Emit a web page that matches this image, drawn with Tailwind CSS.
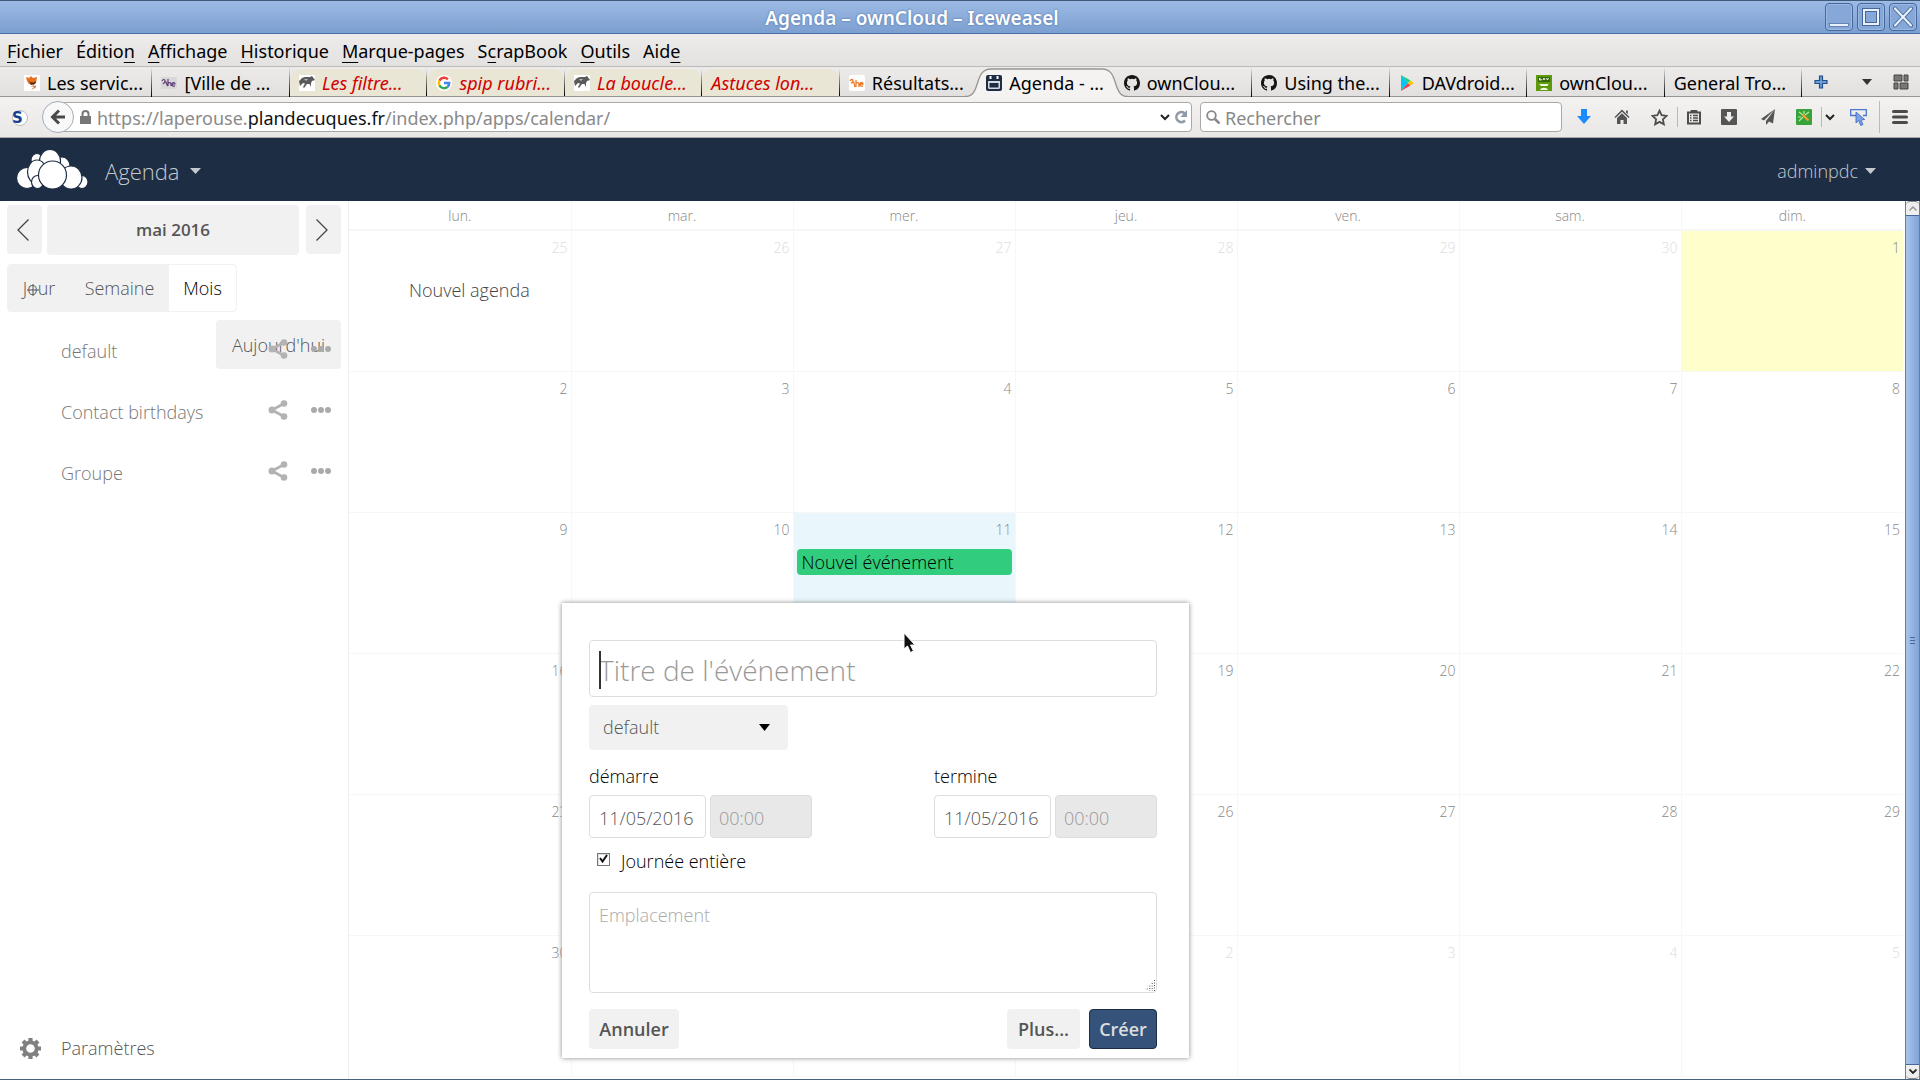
<!DOCTYPE html>
<html lang="fr">
<head>
    <meta charset="UTF-8">
    <meta name="viewport" content="width=device-width, initial-scale=1.0">
    <title>Agenda - ownCloud - Iceweasel</title>
    <script src="https://cdn.jsdelivr.net/npm/@tailwindcss/browser@4"></script>
</head>
<body class="h-screen flex flex-col overflow-hidden bg-white border-b border-[#46627f] font-['Noto_Sans',sans-serif] text-black">
    <!-- Window title -->
    <div class="relative h-[34px] shrink-0 flex items-center justify-center border-t border-b border-t-[#41597a] border-b-[#4a6da5] bg-linear-to-b from-[#9dbae5] to-[#7b9fd0]">
        <span class="text-[19px] leading-6 font-semibold text-white pt-0.5 pr-24 [text-shadow:0_0_2px_#3f639b]">Agenda – ownCloud – Iceweasel</span>
        <div class="absolute right-[3px] top-0.5 flex gap-1">
            <button aria-label="Réduire" class="w-7 h-7 rounded border border-[#47689a] bg-[#85a8d8] shadow-[inset_0_0_0_1px_#9bb9e3]">
                <svg class="w-full h-full" viewBox="0 0 26 26"><rect x="3.500" y="19.500" width="19" height="3" fill="#e9f1fc" stroke="#47689a" stroke-width=".7"/></svg>
            </button>
            <button aria-label="Agrandir" class="w-7 h-7 rounded border border-[#47689a] bg-[#85a8d8] shadow-[inset_0_0_0_1px_#9bb9e3]">
                <svg class="w-full h-full" viewBox="0 0 26 26" fill="none"><rect x="6" y="6" width="14" height="14" stroke="#47689a" stroke-width="4"/><rect x="6" y="6" width="14" height="14" stroke="#e9f1fc" stroke-width="2"/></svg>
            </button>
            <button aria-label="Fermer" class="w-7 h-7 rounded border border-[#47689a] bg-[#85a8d8] shadow-[inset_0_0_0_1px_#9bb9e3]">
                <svg class="w-full h-full" viewBox="0 0 26 26" stroke-linecap="round"><path d="M5 4.500L21 21.500M21 4.500L5 21.500" stroke="#47689a" stroke-width="4"/><path d="M5 4.500L21 21.500M21 4.500L5 21.500" stroke="#e9f1fc" stroke-width="2.200"/></svg>
            </button>
        </div>
    </div>

    <!-- Menu bar -->
    <nav class="h-8 shrink-0 flex items-center gap-[13px] pl-[7px] pt-0.5 text-[18px] leading-6 bg-linear-to-b from-[#edeceb] to-[#e4e2e1]">
        <span><u class="underline-offset-4">F</u>ichier</span>
        <span>Éditio<u class="underline-offset-4">n</u></span>
        <span><u class="underline-offset-4">A</u>ffichage</span>
        <span><u class="underline-offset-4">H</u>istorique</span>
        <span><u class="underline-offset-4">M</u>arque-pages</span>
        <span>S<u class="underline-offset-4">c</u>rapBook</span>
        <span><u class="underline-offset-4">O</u>utils</span>
        <span>Aid<u class="underline-offset-4">e</u></span>
    </nav>

    <!-- Tabs -->
    <div class="h-[31px] shrink-0 flex pl-[15px] border-t border-[#bcbab8] bg-linear-to-b from-[#edebea] to-[#e2e0df] text-[18px] leading-7 whitespace-nowrap shadow-[inset_0_-1px_0_#979593]">
        <div class="flex-1 min-w-0 relative flex items-center gap-[7px] pl-[9px] pt-0.5">
            <svg class="size-4 shrink-0" viewBox="0 0 16 16"><rect width="16" height="16" fill="#fff"/><path d="M2 2l3 1 2-2 2 2 4-1-1 6-3 2-4-1-2-3z" fill="#e5701f"/><path d="M5 6c2 2 4 2 7 0l-1 3-4 1z" fill="#5c2c10"/><path d="M6 11c3 0 5-1 6 0s-2 3-5 4l3-3z" fill="#c9864f"/></svg>
            <span>Les servic...</span>
            <i class="absolute right-0 top-0 h-full w-px bg-linear-to-b from-transparent to-black"></i>
        </div>
        <div class="flex-1 min-w-0 relative flex items-center gap-[7px] pl-[9px] pt-0.5">
            <svg class="size-4 shrink-0" viewBox="0 0 16 16" fill="none"><rect y="2" width="16" height="12" fill="#d9d7d8"/><path d="M1 6c1-2 3-2 3 0s-1 2-2 3M4 6c2 1 1 4 3 5M7 4v7M7 8c3-1 3 0 3 3M11 9h3c0-2-3-2-3 0 0 3 2 2 3 2" stroke="#5b3b78" stroke-width="1.200"/></svg>
            <span>[Ville de ...</span>
            <i class="absolute right-0 top-0 h-full w-px bg-linear-to-b from-transparent to-black"></i>
        </div>
        <div class="flex-1 min-w-0 relative flex items-center gap-[7px] pl-[9px] mt-0.5 mb-px rounded-t-xl bg-[#e9e6d5] italic text-[#d00000]">
            <svg class="size-4 shrink-0" viewBox="0 0 16 16"><rect width="16" height="16" fill="#fff"/><path d="M0 6l3-3 3-1 5 0 2-1 3 4-3 1-1 2 0 4-1.500-3-2.500 0-3 4-1-1 2-3.500-2-.5-3 3z" fill="#5a5a5a"/><path d="M5 4l4 0-2 2z" fill="#bbb"/></svg>
            <span>Les filtre...</span>
            <i class="absolute right-0 top-0 h-full w-px bg-linear-to-b from-transparent to-black"></i>
        </div>
        <div class="flex-1 min-w-0 relative flex items-center gap-[7px] pl-[9px] mt-0.5 mb-px rounded-t-xl bg-[#e9e6d5] italic text-[#d00000]">
            <svg class="size-4 shrink-0" viewBox="0 0 16 16" fill="none" stroke-width="2.400"><circle cx="8" cy="8" r="8" fill="#fff"/><path d="M11.900 4.400A5.200 5.200 0 0 0 3.400 5.600" stroke="#ea4335"/><path d="M3.400 5.600a5.200 5.200 0 0 0 0 4.800" stroke="#fbbc05"/><path d="M3.400 10.400a5.200 5.200 0 0 0 8.200 1.400" stroke="#34a853"/><path d="M11.600 11.800A5 5 0 0 0 13.200 8H8" stroke="#4285f4"/></svg>
            <span>spip rubri...</span>
            <i class="absolute right-0 top-0 h-full w-px bg-linear-to-b from-transparent to-black"></i>
        </div>
        <div class="flex-1 min-w-0 relative flex items-center gap-[7px] pl-[9px] mt-0.5 mb-px rounded-t-xl bg-[#e9e6d5] italic text-[#d00000]">
            <svg class="size-4 shrink-0" viewBox="0 0 16 16"><rect width="16" height="16" fill="#fff"/><path d="M0 6l3-3 3-1 5 0 2-1 3 4-3 1-1 2 0 4-1.500-3-2.500 0-3 4-1-1 2-3.500-2-.5-3 3z" fill="#5a5a5a"/><path d="M5 4l4 0-2 2z" fill="#bbb"/></svg>
            <span>La boucle...</span>
            <i class="absolute right-0 top-0 h-full w-px bg-linear-to-b from-transparent to-black"></i>
        </div>
        <div class="flex-1 min-w-0 relative flex items-center pl-[9px] mt-0.5 mb-px rounded-t-xl bg-[#e9e6d5] italic text-[#d00000]">
            <span>Astuces lon...</span>
            <i class="absolute right-0 top-0 h-full w-px bg-linear-to-b from-transparent to-black"></i>
        </div>
        <div class="flex-1 min-w-0 relative flex items-center gap-[7px] pl-[9px] pt-0.5">
            <svg class="size-4 shrink-0" viewBox="0 0 16 16" fill="none"><rect width="16" height="16" rx="2" fill="#fff"/><path d="M1 6c1-2 3-2 3 0s-1 2-2 2M4 6c2 1 1 5 2 6M7 5v7M7 8c3-1 3 0 3 4M11 9h3c0-2-3-2-3 0 0 3 2 2 3 2" stroke="#ee7a28" stroke-width="1.300"/></svg>
            <span>Résultats...</span>
        </div>
        <!-- Active tab -->
        <div class="flex-1 min-w-0 relative flex items-center pl-[9px] pt-0.5">
            <svg class="absolute -left-3 bottom-0 w-[163px] h-[29px]" viewBox="0 0 163 29" preserveAspectRatio="none"><path d="M0 29C17 29 8 1 26 1H137C155 1 146 29 163 29z" fill="#f4f3f2"/><path d="M0 28.500C17 28.500 8 1 26 1H137C155 1 146 28.500 163 28.500" fill="none" stroke="#979593" stroke-width="1.300"/></svg>
            <div class="relative flex items-center gap-[7px]">
                <svg class="size-4 shrink-0" viewBox="0 0 16 16"><rect width="16" height="16" rx="2" fill="#1d2d44"/><path d="M2 6h12v6.500a1.500 1.500 0 0 1-1.500 1.500h-9A1.500 1.500 0 0 1 2 12.500z" fill="#d6dae0"/><path d="M3.500 8h9v4.500h-9z" fill="#1d2d44"/><path d="M4.500 1v3M11.500 1v3" stroke="#fff" stroke-width="2"/></svg>
                <span>Agenda - ...</span>
            </div>
        </div>
        <div class="flex-1 min-w-0 relative flex items-center gap-[7px] pl-[9px] pt-0.5">
            <svg class="size-4 shrink-0" viewBox="0 0 16 16" fill="#151515"><path d="M8 0C3.580 0 0 3.580 0 8c0 3.540 2.290 6.530 5.470 7.590.4.070.55-.17.55-.38 0-.19-.01-.82-.01-1.490-2.010.37-2.530-.49-2.690-.94-.09-.23-.48-.94-.82-1.130-.28-.15-.68-.52-.01-.53.63-.01 1.080.58 1.230.82.72 1.210 1.870.87 2.330.66.07-.52.28-.87.51-1.070-1.780-.2-3.640-.89-3.640-3.950 0-.87.31-1.590.82-2.150-.08-.2-.36-1.020.08-2.120 0 0 .67-.21 2.200.82a7.600 7.600 0 0 1 4 0c1.530-1.040 2.200-.82 2.200-.82.44 1.100.16 1.920.08 2.120.51.56.82 1.270.82 2.150 0 3.070-1.870 3.750-3.650 3.950.29.25.54.73.54 1.480 0 1.070-.01 1.930-.01 2.200 0 .21.15.46.55.38A8 8 0 0 0 16 8c0-4.420-3.580-8-8-8z"/></svg>
            <span>ownClou...</span>
            <i class="absolute right-0 top-0 h-full w-px bg-linear-to-b from-transparent to-black"></i>
        </div>
        <div class="flex-1 min-w-0 relative flex items-center gap-[7px] pl-[9px] pt-0.5">
            <svg class="size-4 shrink-0" viewBox="0 0 16 16" fill="#151515"><path d="M8 0C3.580 0 0 3.580 0 8c0 3.540 2.290 6.530 5.470 7.590.4.070.55-.17.55-.38 0-.19-.01-.82-.01-1.490-2.010.37-2.530-.49-2.690-.94-.09-.23-.48-.94-.82-1.130-.28-.15-.68-.52-.01-.53.63-.01 1.080.58 1.230.82.72 1.210 1.870.87 2.330.66.07-.52.28-.87.51-1.070-1.780-.2-3.640-.89-3.640-3.950 0-.87.31-1.590.82-2.150-.08-.2-.36-1.020.08-2.120 0 0 .67-.21 2.200.82a7.600 7.600 0 0 1 4 0c1.530-1.040 2.200-.82 2.200-.82.44 1.100.16 1.920.08 2.120.51.56.82 1.270.82 2.150 0 3.070-1.870 3.750-3.650 3.950.29.25.54.73.54 1.480 0 1.070-.01 1.930-.01 2.200 0 .21.15.46.55.38A8 8 0 0 0 16 8c0-4.420-3.580-8-8-8z"/></svg>
            <span>Using the...</span>
            <i class="absolute right-0 top-0 h-full w-px bg-linear-to-b from-transparent to-black"></i>
        </div>
        <div class="flex-1 min-w-0 relative flex items-center gap-[7px] pl-[9px] pt-0.5">
            <svg class="size-4 shrink-0" viewBox="0 0 16 16"><path d="M2 0v16l7-8z" fill="#00c8f5"/><path d="M2 0l7 8 2.500-2.500z" fill="#1fd07a"/><path d="M2 16l7-8 2.500 2.500z" fill="#f43b4e"/><path d="M11.500 5.500L15 8l-3.500 2.500L9 8z" fill="#fdc50b"/></svg>
            <span>DAVdroid...</span>
            <i class="absolute right-0 top-0 h-full w-px bg-linear-to-b from-transparent to-black"></i>
        </div>
        <div class="flex-1 min-w-0 relative flex items-center gap-[7px] pl-[9px] pt-0.5">
            <svg class="size-4 shrink-0" viewBox="0 0 16 16"><rect width="16" height="16" fill="#5c9a0a"/><path d="M2 2h12v5H2z" fill="#366806"/><path d="M3.500 5V3l2 2zM7 5l1-2 1 2M10.500 3l1 2 1-2" fill="none" stroke="#fff" stroke-width=".9"/><path d="M3 9h9l1-1.500-1.500 3.500H5zM4 15c1-3 7-3 8 0z" fill="#f2f8e4"/></svg>
            <span>ownClou...</span>
            <i class="absolute right-0 top-0 h-full w-px bg-linear-to-b from-transparent to-black"></i>
        </div>
        <div class="flex-1 min-w-0 relative flex items-center pl-[9px] pt-0.5">
            <span>General Tro...</span>
            <i class="absolute right-0 top-0 h-full w-px bg-linear-to-b from-transparent to-black"></i>
        </div>
        <div class="w-[118px] shrink-0 flex items-center justify-between pl-3 pr-[11px]">
            <button aria-label="Nouvel onglet"><svg class="size-3.5" viewBox="0 0 14 14"><path d="M5.500 1h3v4.500H13v3H8.500V13h-3V8.500H1v-3h4.500z" fill="#6f9bd6" stroke="#234f8c" stroke-width="1.200"/></svg></button>
            <button aria-label="Liste des onglets" class="pl-3"><svg class="w-2.5 h-1.5" viewBox="0 0 10 6"><path d="M0 0h10L5 6z" fill="#333"/></svg></button>
            <button aria-label="Groupes"><svg class="size-4" viewBox="0 0 16 16" fill="#777" stroke="#444"><path d="M1 1h8v6H1zM11 1h4v6h-4zM1 9h4v6H1zM7 9h8v6H7z"/></svg></button>
        </div>
    </div>

    <!-- Address bar -->
    <div class="h-[41px] shrink-0 flex items-center border-b border-[#a9a7a5] bg-linear-to-b from-[#f3f2f1] to-[#e9e8e7] pl-[11px]">
        <svg class="size-[17px] shrink-0" viewBox="0 0 17 17"><circle cx="9" cy="9" r="7.500" fill="#fff" stroke="#bbb"/><text x="1" y="14" font-family="DejaVu Sans" font-weight="bold" font-size="15" fill="#173f8f">S</text></svg>
        <button aria-label="Page précédente" class="relative z-10 ml-3.5 -mr-5 size-8 shrink-0 rounded-full border border-[#a5adb8] bg-[#f8f8f8] flex items-center justify-center">
            <svg class="size-4" viewBox="0 0 16 16" fill="none" stroke="#4a4a4a" stroke-width="3"><path d="M15 8H3M9 1.500L2.500 8 9 14.500"/></svg>
        </button>
        <div class="flex-1 h-[30px] flex items-center border border-[#aaa8a5] rounded-sm bg-white pl-[25px] pr-[3px] text-[18px] leading-6 text-[#8a8a8a]">
            <svg class="w-[11px] h-3.5 shrink-0" viewBox="0 0 11 14"><path d="M0 6h11v8H0z" fill="#777"/><path d="M2.500 7V4a3 3 0 0 1 6 0v3" fill="none" stroke="#777" stroke-width="2"/></svg>
            <span class="flex-1 pl-1.5 pt-0.5">https://laperouse.<span class="text-[#111]">plandecuques.fr</span>/index.php/apps/calendar/</span>
            <svg class="w-2.5 h-[7px] mr-1" viewBox="0 0 10 7"><path d="M1 1l4 4 4-4" fill="none" stroke="#222" stroke-width="2"/></svg>
            <svg class="size-3.5" viewBox="0 0 14 14"><path d="M10.500 3.200A5 5 0 1 0 11 10.500" fill="none" stroke="#909aa8" stroke-width="2.600"/><path d="M13 0v7H6.500z" fill="#909aa8"/></svg>
        </div>
        <div class="w-[362px] h-[30px] ml-2 shrink-0 flex items-center gap-[5px] border border-[#aaa8a5] rounded-sm bg-white pl-[5px]">
            <svg class="size-3.5 shrink-0" viewBox="0 0 14 14" fill="none" stroke="#888"><circle cx="5.500" cy="5.500" r="4.300" stroke-width="1.800"/><path d="M9 9l4.500 4.500" stroke-width="2.600"/></svg>
            <input type="text" aria-label="Rechercher" placeholder="Rechercher" class="flex-1 h-7 pt-0.5 text-[18px] leading-6 outline-none placeholder:text-[#888]">
        </div>
        <div class="w-[358px] h-full shrink-0 flex items-center pl-[3px]">
            <button aria-label="Téléchargements" class="w-[38px] flex justify-center"><svg class="size-4" viewBox="0 0 16 16"><path d="M5 0h6v7h4l-7 8-7-8h4z" fill="#1a8cff"/></svg></button>
            <button aria-label="Accueil" class="w-[38px] flex justify-center"><svg class="size-4" viewBox="0 0 16 16" fill="#555"><path d="M8 .5L15.500 8l-1 1L8 2.800 1.500 9l-1-1z"/><path d="M8 4.300l5 4.700v6H9.500v-4h-3v4H3V9z"/><path d="M12 1.500h1.800v3.700L12 3.500z"/></svg></button>
            <button aria-label="Marquer cette page" class="w-9 flex justify-center"><svg class="size-[17px]" viewBox="0 0 16 16"><path d="M8 1.600l2 4.300 4.700.6-3.500 3.200.9 4.700L8 12.100l-4.100 2.300.9-4.700L1.300 6.500 6 5.900z" fill="none" stroke="#4d4d4d" stroke-width="1.700"/></svg></button>
            <button aria-label="Marque-pages" class="w-8 h-5 border-l border-[#b4bbc4] flex justify-center items-center"><svg class="size-4" viewBox="0 0 16 16"><path d="M2 3.500h12v11H2z" fill="none" stroke="#4d4d4d" stroke-width="2"/><path d="M5 3V1.500h6V3z" stroke="#4d4d4d" fill="#4d4d4d"/><path d="M4 6.500h1.500M7 6.500h5M4 9h1.500M7 9h5M4 11.500h1.500M7 11.500h5" stroke="#4d4d4d" stroke-width="1.300"/></svg></button>
            <button aria-label="Enregistrer" class="w-10 flex justify-center"><svg class="size-4" viewBox="0 0 16 16"><rect width="16" height="16" rx="1" fill="#555"/><path d="M6 3h4v4.500h3L8 13 3 7.500h3z" fill="#eee"/></svg></button>
            <button aria-label="Envoyer" class="w-[38px] flex justify-center"><svg class="size-4" viewBox="0 0 16 16" fill="#555"><path d="M15 0L1 10l3 1.500zM15 0L6 12v4l2.500-2.800zM15 0l-7 12 5 2.500z"/></svg></button>
            <button aria-label="Capture" class="w-[34px] flex justify-center"><svg class="size-4" viewBox="0 0 16 16"><rect width="16" height="16" rx="1" fill="#37a33a"/><path d="M3 3l4 3M13 3L9 6M3 12l4-4M8 2v3M2 8h3" stroke="#b4eb9f" stroke-width="1.200"/><path d="M6.500 5.500l6 6" stroke="#ff9a2e" stroke-width="2.200"/></svg></button>
            <button aria-label="Options de capture" class="w-4 h-5 border-l border-[#b4bbc4] flex justify-center items-center"><svg class="w-2.5 h-[7px]" viewBox="0 0 10 7"><path d="M1 1l4 4 4-4" fill="none" stroke="#222" stroke-width="2"/></svg></button>
            <button aria-label="Sélection" class="w-[42px] flex justify-center"><svg class="size-[17px]" viewBox="0 0 17 17"><path d="M6 6.500H.7V.7h15.600v5.800H13" fill="none" stroke="#4a76d0" stroke-width="1.300"/><path d="M6 3v11l2.700-2.500 2 5 2.300-1-2-4.500 3.700-.5z" fill="#7ba4ec" stroke="#3a63b8" stroke-width=".8"/></svg></button>
            <button aria-label="Menu" class="flex-1 h-8 border-l border-[#b4bbc4] flex justify-center items-center"><svg class="size-4" viewBox="0 0 16 16"><path d="M1.500 2.500h13M1.500 8h13M1.500 13.500h13" stroke="#4a4a4a" stroke-width="3" stroke-linecap="round"/></svg></button>
        </div>
    </div>

    <!-- ownCloud header -->
    <header class="h-[63px] shrink-0 flex items-center bg-[#1d2d44] pl-[17px] pr-11 font-['Open_Sans',sans-serif] font-light text-[#c4c9d0]">
        <a href="#" aria-label="ownCloud"><svg class="w-[71px] h-[40px]" viewBox="0 0 71 40" fill="#fff" stroke="#1d2d44" stroke-width="1.200"><ellipse cx="20" cy="10" rx="6" ry="6.500"/><ellipse cx="45" cy="16" rx="8" ry="9"/><ellipse cx="33" cy="11" rx="10.500" ry="11.500"/><ellipse cx="10" cy="28" rx="10.500" ry="10.500"/><ellipse cx="65" cy="32" rx="6" ry="6.500"/><ellipse cx="20" cy="22" rx="9.500" ry="12"/><ellipse cx="20.500" cy="32" rx="6" ry="6.500"/><ellipse cx="54" cy="27.500" rx="11" ry="11.500"/><circle cx="35.500" cy="25" r="14"/></svg></a>
        <a href="#" class="flex items-center gap-[11px] pl-[17px] pt-0.5 text-[22px] leading-7">Agenda <svg class="w-[11px] h-1.5" viewBox="0 0 11 6"><path d="M0 0h11L5.500 6z" fill="#c4c9d0"/></svg></a>
        <a href="#" class="ml-auto flex items-center gap-[7px] pt-0.5 text-[18px] leading-6">adminpdc <svg class="w-[11px] h-1.5" viewBox="0 0 11 6"><path d="M0 0h11L5.500 6z" fill="#c4c9d0"/></svg></a>
    </header>

    <main class="relative flex-1 min-h-0 flex font-['Open_Sans',sans-serif] font-light text-[18px] leading-6">
        <!-- Navigation -->
        <aside class="relative w-[349px] shrink-0 flex flex-col border-r border-[#eee] text-[#555]">
            <div class="flex gap-[5px] pl-[7px] pr-[7px] pt-1">
                <button aria-label="Mois précédent" class="w-[35px] h-[49px] pr-1 rounded bg-[#f1f1f1] flex items-center justify-center"><svg class="w-3 h-[22px]" viewBox="0 0 12 22"><path d="M11.500.5L1 11l10.500 10.500" fill="none" stroke="#444" stroke-width="1.300"/></svg></button>
                <button class="flex-1 h-[50px] rounded bg-[#f1f1f1] text-[17px] font-semibold">mai 2016</button>
                <button aria-label="Mois suivant" class="w-[35px] h-[49px] pr-1 ml-0.5 rounded bg-[#f1f1f1] flex items-center justify-center"><svg class="w-3 h-[22px]" viewBox="0 0 12 22"><path d="M.5.5L11 11 .5 21.500" fill="none" stroke="#444" stroke-width="1.300"/></svg></button>
            </div>
            <div class="flex w-[230px] h-12 mt-[9px] ml-[7px] rounded border border-[#f1f1f1] bg-[#f1f1f1]">
                <button class="relative w-[62px]">Jour
                    <svg class="absolute left-[19px] top-[19px] size-3" viewBox="0 0 12 12"><path d="M6 0v12M0 6h12" stroke="#555"/></svg>
                </button>
                <button class="flex-1">Semaine</button>
                <button class="w-[67px] rounded-r bg-white text-black">Mois</button>
            </div>
            <button class="absolute right-[7px] top-[119px] w-[125px] h-[49px] rounded bg-[#f1f1f1]">Aujourd'hui</button>
            <ul class="relative mt-2 pointer-events-none text-[#777]">
                <li class="h-[61px] flex items-center pl-[61px] pr-[17px]">
                    <span class="flex-1">default</span>
                    <svg class="size-5 mb-1 mr-[23px]" viewBox="0 0 20 20" fill="#b3b3b3"><path d="M16 3.500L4 10l12 6.500" fill="none" stroke="#b3b3b3" stroke-width="2.800"/><circle cx="16" cy="3.500" r="3.300"/><circle cx="4" cy="10" r="3.500"/><circle cx="16" cy="16.500" r="3.300"/></svg>
                    <svg class="w-5 h-1.5 mb-1" viewBox="0 0 20 6" fill="#aaa"><circle cx="3" cy="3" r="3"/><circle cx="10" cy="3" r="3"/><circle cx="17" cy="3" r="3"/></svg>
                </li>
                <li class="h-[61px] flex items-center pl-[61px] pr-[17px]">
                    <span class="flex-1">Contact birthdays</span>
                    <svg class="size-5 mb-1 mr-[23px]" viewBox="0 0 20 20" fill="#b3b3b3"><path d="M16 3.500L4 10l12 6.500" fill="none" stroke="#b3b3b3" stroke-width="2.800"/><circle cx="16" cy="3.500" r="3.300"/><circle cx="4" cy="10" r="3.500"/><circle cx="16" cy="16.500" r="3.300"/></svg>
                    <svg class="w-5 h-1.5 mb-1" viewBox="0 0 20 6" fill="#aaa"><circle cx="3" cy="3" r="3"/><circle cx="10" cy="3" r="3"/><circle cx="17" cy="3" r="3"/></svg>
                </li>
                <li class="h-[61px] flex items-center pl-[61px] pr-[17px]">
                    <span class="flex-1">Groupe</span>
                    <svg class="size-5 mb-1 mr-[23px]" viewBox="0 0 20 20" fill="#b3b3b3"><path d="M16 3.500L4 10l12 6.500" fill="none" stroke="#b3b3b3" stroke-width="2.800"/><circle cx="16" cy="3.500" r="3.300"/><circle cx="4" cy="10" r="3.500"/><circle cx="16" cy="16.500" r="3.300"/></svg>
                    <svg class="w-5 h-1.5 mb-1" viewBox="0 0 20 6" fill="#aaa"><circle cx="3" cy="3" r="3"/><circle cx="10" cy="3" r="3"/><circle cx="17" cy="3" r="3"/></svg>
                </li>
            </ul>
            <button class="mt-auto mb-[19px] flex items-center gap-5 pl-5 text-left">
                <svg class="size-[21px]" viewBox="0 0 22 22"><circle cx="11" cy="11" r="6.500" fill="none" stroke="#808080" stroke-width="4"/><path d="M11 0v4M11 18v4M0 11h4M18 11h4M3.200 3.200L6 6M16 16l2.800 2.800M3.200 18.800L6 16M16 6l2.800-2.800" stroke="#808080" stroke-width="4.400"/></svg>
                <span>Paramètres</span>
            </button>
        </aside>

        <!-- Calendar -->
        <section class="relative flex-1 min-w-0 pb-[2px] pr-0.5">
            <table class="w-full h-full table-fixed border-collapse">
                <thead>
                    <tr class="h-[29px] text-sm text-[#888]">
                        <th class="pt-0.5 font-light border-r border-b-2 border-[#f7f7f7]">lun.</th>
                        <th class="pt-0.5 font-light border-r border-b-2 border-[#f7f7f7]">mar.</th>
                        <th class="pt-0.5 font-light border-r border-b-2 border-[#f7f7f7]">mer.</th>
                        <th class="pt-0.5 font-light border-r border-b-2 border-[#f7f7f7]">jeu.</th>
                        <th class="pt-0.5 font-light border-r border-b-2 border-[#f7f7f7]">ven.</th>
                        <th class="pt-0.5 font-light border-r border-b-2 border-[#f7f7f7]">sam.</th>
                        <th class="pt-0.5 font-light border-b-2 border-[#f7f7f7]">dim.</th>
                    </tr>
                </thead>
                <tbody id="days"></tbody>
            </table>
            <span class="absolute left-[60px] top-[77px] text-[#444]">Nouvel agenda</span>

            <!-- New event -->
            <form class="absolute left-[213px] top-[402px] w-[627px] pt-[37px] pb-[9px] pl-[27px] pr-8 bg-white shadow-[0_0_5px_#888]">
                <div class="relative">
                    <input id="title" type="text" aria-label="Titre de l'événement" placeholder="Titre de l'événement" class="block w-full h-[57px] px-[9px] pt-0.5 border border-[#ddd] rounded text-[28px] placeholder:text-[#999]">
                    <i class="absolute left-2.5 top-[11px] w-0.5 h-[38px] bg-[#333]"></i>
                </div>
                <div class="relative w-[199px] mt-2">
                    <select aria-label="Agenda" class="block w-full h-[45px] pl-3.5 pb-0.5 rounded bg-[#f1f1f1] appearance-none text-[#555]">
                        <option>default</option>
                    </select>
                    <svg class="absolute right-[18px] top-[19px] w-[11px] h-[7px] pointer-events-none" viewBox="0 0 11 7"><path d="M0 0h11L5.500 7z"/></svg>
                </div>
                <div class="flex justify-between mt-[14px]">
                    <div>
                        <label for="startDate" class="block">démarre</label>
                        <div class="flex gap-1 mt-[7px]">
                            <input id="startDate" type="text" value="11/05/2016" class="w-[117px] h-[43px] px-[9px] pt-0.5 border border-[#ddd] rounded text-[#555]">
                            <input type="text" aria-label="Heure de début" value="00:00" disabled class="w-[102px] h-[43px] px-2 pt-0.5 border border-[#ddd] rounded bg-[#e8e8e8] text-[#999]">
                        </div>
                    </div>
                    <div>
                        <label for="endDate" class="block">termine</label>
                        <div class="flex gap-1 mt-[7px]">
                            <input id="endDate" type="text" value="11/05/2016" class="w-[117px] h-[43px] px-[9px] pt-0.5 border border-[#ddd] rounded text-[#555]">
                            <input type="text" aria-label="Heure de fin" value="00:00" disabled class="w-[102px] h-[43px] px-2 pt-0.5 border border-[#ddd] rounded bg-[#e8e8e8] text-[#999]">
                        </div>
                    </div>
                </div>
                <div class="relative flex items-center gap-[11px] mt-[11px] pl-2">
                    <input id="allDay" type="checkbox" checked class="appearance-none size-[13px] mb-1 border border-[#777] bg-white shadow-[inset_1px_1px_0_#ddd]">
                    <svg class="absolute left-2.5 top-[5px] size-[9px] pointer-events-none" viewBox="0 0 9 9"><path d="M1 4l2.500 3.500L8 1" fill="none" stroke="#111" stroke-width="2"/></svg>
                    <label for="allDay">Journée entière</label>
                </div>
                <textarea aria-label="Emplacement" placeholder="Emplacement" class="block w-full h-[101px] mt-[19px] px-[9px] py-2.5 border border-[#ddd] rounded resize-none placeholder:text-[#aaa]"></textarea>
                <svg class="absolute right-[34px] bottom-[67px] w-[9px] h-[11px] pointer-events-none" viewBox="0 0 9 11"><path d="M8.500 0v11M6.200 3v8M3.800 5.500V11M1.200 8.500V11" stroke="#555" stroke-dasharray="1 1.500"/></svg>
                <div class="flex gap-[9px] mt-4 text-[#555] font-semibold">
                    <button type="button" class="w-[90px] h-10 mr-auto rounded bg-[#f1f1f1]">Annuler</button>
                    <button type="button" class="w-[73px] h-10 rounded bg-[#f1f1f1]">Plus...</button>
                    <button type="button" class="w-[68px] h-10 rounded border border-[#1d2d44] bg-[#35537a] text-[#ddd]">Créer</button>
                </div>
            </form>

            <!-- Pointer -->
            <svg class="absolute left-[554px] top-[431px] w-[14px] h-[22px] pointer-events-none" viewBox="0 0 14 22"><path d="M1 1v16l3.500-3 3 6.500 3-1.500-3-6H12z" fill="#111" stroke="#fff"/></svg>
        </section>

        <!-- Scrollbar -->
        <div class="w-[15px] shrink-0 flex flex-col border-x border-[#5c7fae]">
            <div class="h-3.5 rounded-t border-t border-[#888] bg-[#eee] flex items-center justify-center"><svg class="w-2 h-[5px]" viewBox="0 0 8 5"><path d="M.5 4.500L4 1l3.500 3.500" fill="none" stroke="#999" stroke-width="1.500"/></svg></div>
            <div class="flex-1 flex flex-col items-center justify-center gap-0.5 border-y border-[#47689a] bg-linear-to-r from-[#a9c5ec] to-[#7fa3d6]">
                <i class="w-[5px] h-px bg-[#47689a]"></i><i class="w-[5px] h-px bg-[#47689a]"></i><i class="w-[5px] h-px bg-[#47689a]"></i>
            </div>
            <div class="h-3.5 rounded-b border-b border-[#888] bg-[#eee] flex items-center justify-center"><svg class="w-2 h-[5px]" viewBox="0 0 8 5"><path d="M.5.5L4 4 7.500.5" fill="none" stroke="#222" stroke-width="1.800"/></svg></div>
        </div>
    </main>

    <script>
        // Month grid: starts on Monday 25 April 2016
        const tbody = document.getElementById('days');
        const day = new Date(2016, 3, 25);

        for (let week = 0; week < 6; week++) {
            const row = tbody.insertRow();
            row.className = 'h-[16%]';
            for (let i = 0; i < 7; i++) {
                const cell = row.insertCell();
                const inMonth = day.getMonth() === 4;
                const date = day.getDate();

                cell.className = 'align-top border border-l-0 border-[#f7f7f7] pt-[7px] px-[3px]';
                if (i === 6) cell.classList.add('border-r-0');
                if (inMonth && date === 1) cell.classList.add('bg-[#ffffcc]');
                if (inMonth && date === 11) cell.classList.add('bg-[#e9f6fb]');

                const number = document.createElement('div');
                number.className = inMonth ? 'text-right text-sm text-[#888]' : 'text-right text-sm text-[#ddd]';
                number.textContent = date;
                cell.append(number);

                if (inMonth && date === 11) {
                    const event = document.createElement('div');
                    event.className = 'mt-[9px] h-[26px] px-[5px] leading-[26px] rounded bg-[#31cc7c] text-black';
                    event.textContent = 'Nouvel événement';
                    cell.append(event);
                }
                day.setDate(date + 1);
            }
        }
    </script>
</body>
</html>
